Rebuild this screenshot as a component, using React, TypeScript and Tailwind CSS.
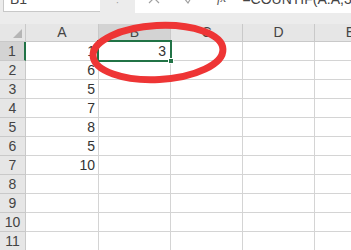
import React from 'react';

const cols = [
  { key: 'A', w: 'w-[73px]' },
  { key: 'B', w: 'w-[72px]' },
  { key: 'C', w: 'w-[72px]' },
  { key: 'D', w: 'w-[72px]' },
  { key: 'E', w: 'w-[72px]' },
];

const colA = ['1', '6', '5', '7', '8', '5', '10', '', '', '', ''];

export default function App() {
  return (
    <div className="relative w-[351px] h-[250px] overflow-hidden bg-white text-[#333] font-['Liberation_Sans',Arial,sans-serif]">
      {/* formula bar, cut off at the top */}
      <div className="h-[24px] bg-[#ececec]">
        <div className="h-[13px] flex overflow-hidden">
          <div className="ml-[3px] w-[97px] h-[12px] bg-white border-l border-b border-[#c8c8c8] overflow-hidden">
            <div className="mt-[-8px] pl-[6px] text-[14px] leading-[14px] text-[#444]">B1</div>
          </div>
          <div className="w-[35px] flex justify-center">
            <span className="mt-[-2px] text-[10px] leading-[10px] text-[#999]">·</span>
          </div>
          <div className="flex-1 h-[13px] bg-white flex overflow-hidden">
            <div className="w-[110px] flex items-start text-[#9a9a9a]">
              <svg className="ml-[13px] mt-[-8px]" width="12" height="12" viewBox="0 0 12 12">
                <path d="M1 1 L11 11 M11 1 L1 11" stroke="#a0a0a0" strokeWidth="1.2" fill="none" />
              </svg>
              <svg className="ml-[23px] mt-[-8px]" width="12" height="12" viewBox="0 0 12 12">
                <path d="M1 6 L5 11 L11 1" stroke="#a0a0a0" strokeWidth="1.2" fill="none" />
              </svg>
              <span className="ml-[22px] mt-[-9px] text-[13px] leading-[14px] italic text-[#555] font-['Liberation_Serif',serif]">fx</span>
            </div>
            <div className="w-px h-[13px] bg-[#c8c8c8]" />
            <div className="mt-[-8px] pl-[16px] text-[14px] leading-[14px] text-[#444] whitespace-nowrap">=COUNTIF(A:A,3)</div>
          </div>
        </div>
      </div>

      {/* column headers */}
      <div className="flex h-[18px]">
        <div className="w-[26px] shrink-0 bg-[#e6e6e6] border-r border-b border-[#c9c9c9] relative">
          <svg className="absolute right-[3px] bottom-[3px]" width="9" height="9" viewBox="0 0 9 9">
            <path d="M9 0 L9 9 L0 9 Z" fill="#b5b5b5" />
          </svg>
        </div>
        {cols.map((c) => (
          <div
            key={c.key}
            className={`${c.w} shrink-0 flex items-center justify-center text-[14px] text-[#444] border-r ${
              c.key === 'B'
                ? 'bg-[#d3d3d3] border-b-2 border-b-[#217346] border-r-[#c9c9c9]'
                : 'bg-[#e6e6e6] border-b border-[#c9c9c9]'
            }`}
          >
            {c.key}
          </div>
        ))}
      </div>

      {/* rows */}
      {colA.map((a, i) => (
        <div key={i} className="flex h-[19px]">
          <div
            className={`w-[26px] shrink-0 flex items-end justify-center pb-[1px] text-[14px] leading-[16px] text-[#444] border-b border-[#c9c9c9] ${
              i === 0 ? 'bg-[#d3d3d3] border-r-2 border-r-[#217346]' : 'bg-[#e6e6e6] border-r border-r-[#c9c9c9]'
            }`}
          >
            {i + 1}
          </div>
          <div className="w-[73px] shrink-0 flex items-end justify-end pr-[3px] pb-[1px] text-[14px] leading-[16px] border-r border-b border-[#d4d4d4]">
            {a}
          </div>
          <div className="w-[72px] shrink-0 flex items-end justify-end pr-[4px] pb-[1px] text-[14px] leading-[16px] border-r border-b border-[#d4d4d4]">
            {i === 0 ? '3' : ''}
          </div>
          <div className="w-[72px] shrink-0 border-r border-b border-[#d4d4d4]" />
          <div className="w-[72px] shrink-0 border-r border-b border-[#d4d4d4]" />
          <div className="w-[72px] shrink-0 border-r border-b border-[#d4d4d4]" />
        </div>
      ))}

      {/* active cell B1 */}
      <div className="absolute left-[97px] top-[40px] w-[75px] h-[22px] border-2 border-[#217346]" />
      <div className="absolute left-[168px] top-[58px] w-[6px] h-[6px] bg-[#217346] border border-white" />

      {/* red annotation ring */}
      <svg className="absolute left-0 top-0" width="351" height="250" viewBox="0 0 351 250">
        <ellipse cx="158" cy="52.5" rx="65" ry="27" fill="none" stroke="#ee3535" strokeWidth="7" transform="rotate(-3 158 52.5)" />
      </svg>
    </div>
  );
}
